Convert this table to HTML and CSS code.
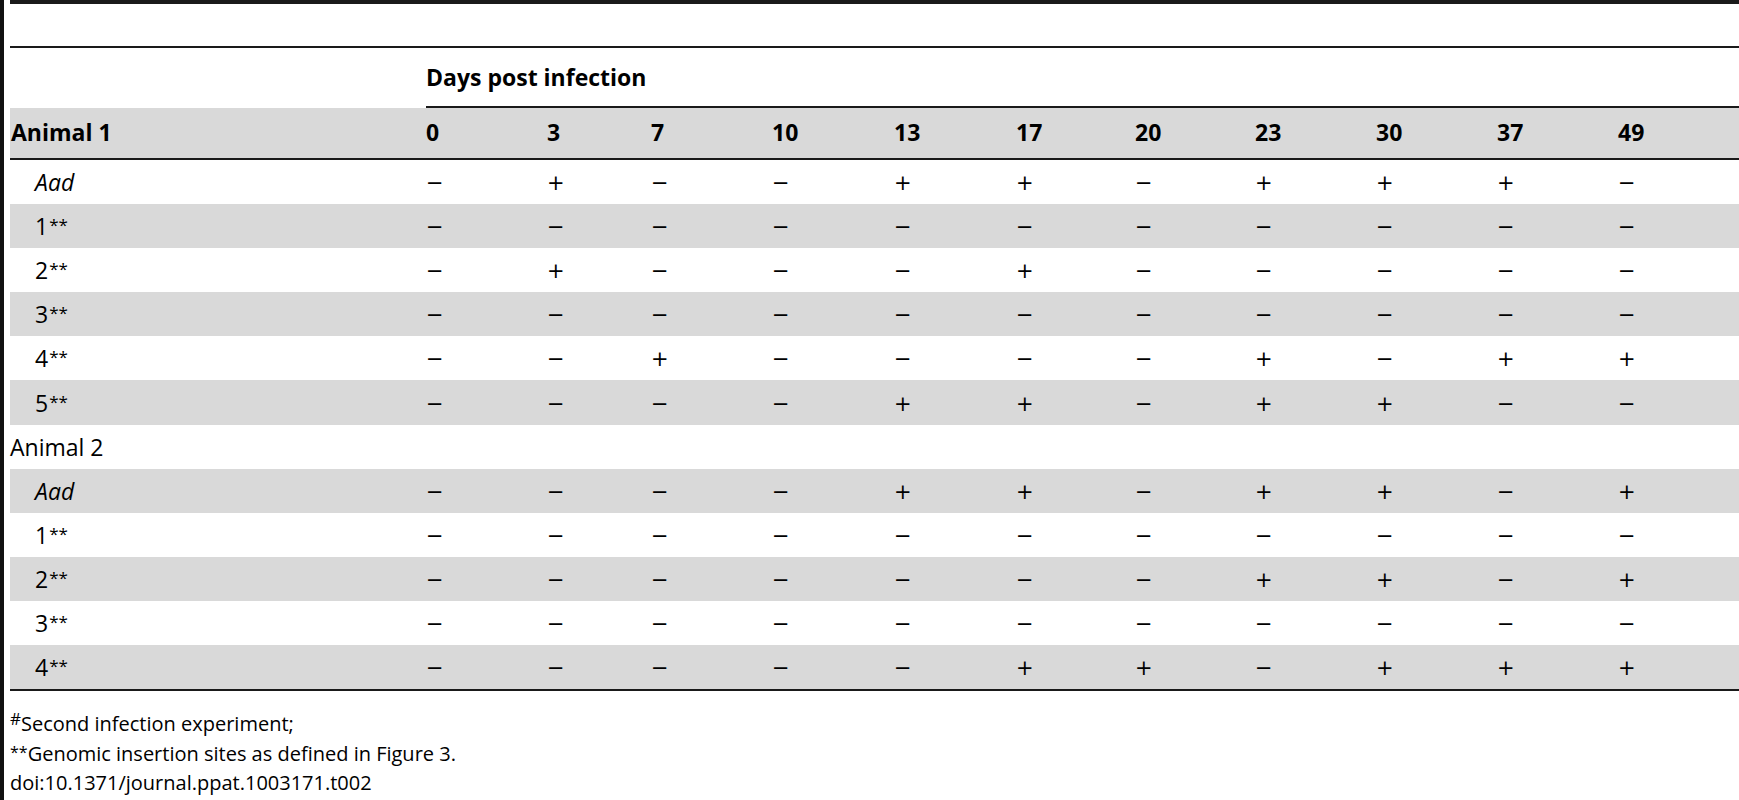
FILE: index.html
```html
<!DOCTYPE html>
<html>
<head>
<meta charset="utf-8">
<link rel="stylesheet" href="styles.css">
</head>
<body>
<div class="page">
<table class="tbl">
<colgroup>
<col class="c-first">
<col class="c121"><col class="c104"><col class="c121"><col class="c122"><col class="c122"><col class="c119"><col class="c120"><col class="c121"><col class="c121"><col class="c121"><col class="c121">
</colgroup>
<tr class="spacer"><td colspan="12"></td></tr>
<tr class="days"><td></td><td colspan="11" class="days-cell">Days post infection</td></tr>
<tr class="head"><td class="lab">Animal 1</td><td>0</td><td>3</td><td>7</td><td>10</td><td>13</td><td>17</td><td>20</td><td>23</td><td>30</td><td>37</td><td>49</td></tr>
<tr class="row"><td class="sub"><i>Aad</i></td><td class="s">−</td><td class="s">+</td><td class="s">−</td><td class="s">−</td><td class="s">+</td><td class="s">+</td><td class="s">−</td><td class="s">+</td><td class="s">+</td><td class="s">+</td><td class="s">−</td></tr>
<tr class="row g"><td class="sub">1<span class="ast">**</span></td><td class="s">−</td><td class="s">−</td><td class="s">−</td><td class="s">−</td><td class="s">−</td><td class="s">−</td><td class="s">−</td><td class="s">−</td><td class="s">−</td><td class="s">−</td><td class="s">−</td></tr>
<tr class="row"><td class="sub">2<span class="ast">**</span></td><td class="s">−</td><td class="s">+</td><td class="s">−</td><td class="s">−</td><td class="s">−</td><td class="s">+</td><td class="s">−</td><td class="s">−</td><td class="s">−</td><td class="s">−</td><td class="s">−</td></tr>
<tr class="row g"><td class="sub">3<span class="ast">**</span></td><td class="s">−</td><td class="s">−</td><td class="s">−</td><td class="s">−</td><td class="s">−</td><td class="s">−</td><td class="s">−</td><td class="s">−</td><td class="s">−</td><td class="s">−</td><td class="s">−</td></tr>
<tr class="row"><td class="sub">4<span class="ast">**</span></td><td class="s">−</td><td class="s">−</td><td class="s">+</td><td class="s">−</td><td class="s">−</td><td class="s">−</td><td class="s">−</td><td class="s">+</td><td class="s">−</td><td class="s">+</td><td class="s">+</td></tr>
<tr class="row g"><td class="sub">5<span class="ast">**</span></td><td class="s">−</td><td class="s">−</td><td class="s">−</td><td class="s">−</td><td class="s">+</td><td class="s">+</td><td class="s">−</td><td class="s">+</td><td class="s">+</td><td class="s">−</td><td class="s">−</td></tr>
<tr class="row"><td class="lab2" colspan="12">Animal 2</td></tr>
<tr class="row g"><td class="sub"><i>Aad</i></td><td class="s">−</td><td class="s">−</td><td class="s">−</td><td class="s">−</td><td class="s">+</td><td class="s">+</td><td class="s">−</td><td class="s">+</td><td class="s">+</td><td class="s">−</td><td class="s">+</td></tr>
<tr class="row"><td class="sub">1<span class="ast">**</span></td><td class="s">−</td><td class="s">−</td><td class="s">−</td><td class="s">−</td><td class="s">−</td><td class="s">−</td><td class="s">−</td><td class="s">−</td><td class="s">−</td><td class="s">−</td><td class="s">−</td></tr>
<tr class="row g"><td class="sub">2<span class="ast">**</span></td><td class="s">−</td><td class="s">−</td><td class="s">−</td><td class="s">−</td><td class="s">−</td><td class="s">−</td><td class="s">−</td><td class="s">+</td><td class="s">+</td><td class="s">−</td><td class="s">+</td></tr>
<tr class="row"><td class="sub">3<span class="ast">**</span></td><td class="s">−</td><td class="s">−</td><td class="s">−</td><td class="s">−</td><td class="s">−</td><td class="s">−</td><td class="s">−</td><td class="s">−</td><td class="s">−</td><td class="s">−</td><td class="s">−</td></tr>
<tr class="row g"><td class="sub">4<span class="ast">**</span></td><td class="s">−</td><td class="s">−</td><td class="s">−</td><td class="s">−</td><td class="s">−</td><td class="s">+</td><td class="s">+</td><td class="s">−</td><td class="s">+</td><td class="s">+</td><td class="s">+</td></tr>
</table>
<div class="notes">
<div><sup class="hash">#</sup>Second infection experiment;</div>
<div><span class="ast2">**</span>Genomic insertion sites as defined in Figure 3.</div>
<div>doi:10.1371/journal.ppat.1003171.t002</div>
</div>
</div>
</body>
</html>
```
FILE: styles.css
```css
html, body {
  margin: 0;
  padding: 0;
  background: #fff;
}
body {
  font-family: "Open Sans", "Noto Sans", sans-serif;
  color: #000;
  font-size: 20px;
}
.page {
  border-left: 4px solid #111;
  padding-left: 6px;
  height: 800px;
  box-sizing: border-box;
  overflow: hidden;
}
.tbl {
  width: 1729px;
  table-layout: fixed;
  border-collapse: separate;
  border-spacing: 0;
  border-top: 4px solid #1a1a1a;
  border-bottom: 2px solid #1a1a1a;
  font-size: 23px;
}
.c-first { width: 416px; }
.c121 { width: 121px; }
.c104 { width: 104px; }
.c122 { width: 122px; }
.c119 { width: 119px; }
.c120 { width: 120px; }
.tbl td {
  padding: 0;
  text-align: left;
  vertical-align: middle;
  white-space: nowrap;
}
.spacer td {
  height: 42px;
  border-bottom: 2px solid #1a1a1a;
}
.days td {
  height: 58px;
}
.days-cell {
  font-weight: 700;
  border-bottom: 2px solid #1a1a1a;
}
.head td {
  height: 47px;
  background: #d9d9d9;
  font-weight: 700;
  border-bottom: 2px solid #1a1a1a;
  padding-bottom: 3px;
}
.head .lab { padding-left: 1px; }
.row td {
  height: 44.1px;
}
.row.g td {
  background: #d9d9d9;
}
.tbl td.s {
  font-family: "DejaVu Sans", sans-serif;
  font-size: 21px;
  height: 42.1px;
  padding-top: 2px;
}
.sub { padding-left: 25px !important; }
.lab2 { padding-left: 0; }
.ast {
  font-size: 17px;
  vertical-align: 4px;
  margin-left: 1px;
}
.notes {
  margin-top: 18px;
  font-size: 20px;
  line-height: 29px;
}
.hash {
  font-size: 17px;
  vertical-align: 6px;
  line-height: 0;
}
.ast2 {
  font-size: 16px;
  vertical-align: 3px;
}
```
